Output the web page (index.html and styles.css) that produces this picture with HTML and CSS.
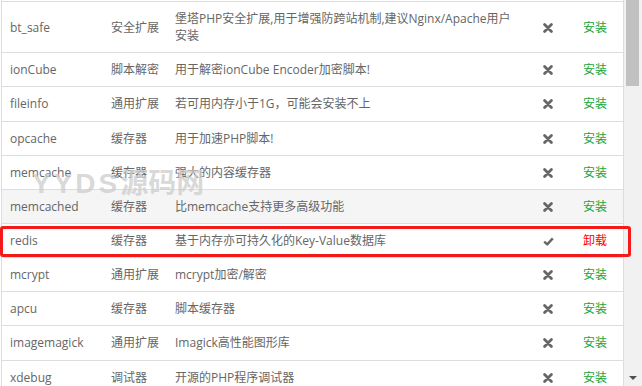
FILE: index.html
```html
<!DOCTYPE html>
<html lang="zh-CN">
<head>
<meta charset="utf-8">
<title>PHP扩展</title>
<link rel="stylesheet" href="styles.css">
</head>
<body>
<div class="page">
  <div class="panel">
    <table class="ext-table">
      <colgroup>
        <col class="c-name"><col class="c-type"><col class="c-desc"><col class="c-stat"><col class="c-op">
      </colgroup>
      <tbody>
        <tr><td>bt_safe</td><td>安全扩展</td><td>堡塔PHP安全扩展,用于增强防跨站机制,建议Nginx/Apache用户安装</td><td class="ctr"><svg class="ico" viewBox="0 0 10 10"><path d="M1.6 1.6L8.4 8.4M8.4 1.6L1.6 8.4"/></svg></td><td class="ctr"><a class="install">安装</a></td></tr>
        <tr><td>ionCube</td><td>脚本解密</td><td>用于解密ionCube Encoder加密脚本!</td><td class="ctr"><svg class="ico" viewBox="0 0 10 10"><path d="M1.6 1.6L8.4 8.4M8.4 1.6L1.6 8.4"/></svg></td><td class="ctr"><a class="install">安装</a></td></tr>
        <tr><td>fileinfo</td><td>通用扩展</td><td>若可用内存小于1G，可能会安装不上</td><td class="ctr"><svg class="ico" viewBox="0 0 10 10"><path d="M1.6 1.6L8.4 8.4M8.4 1.6L1.6 8.4"/></svg></td><td class="ctr"><a class="install">安装</a></td></tr>
        <tr><td>opcache</td><td>缓存器</td><td>用于加速PHP脚本!</td><td class="ctr"><svg class="ico" viewBox="0 0 10 10"><path d="M1.6 1.6L8.4 8.4M8.4 1.6L1.6 8.4"/></svg></td><td class="ctr"><a class="install">安装</a></td></tr>
        <tr><td>memcache</td><td>缓存器</td><td>强大的内容缓存器</td><td class="ctr"><svg class="ico" viewBox="0 0 10 10"><path d="M1.6 1.6L8.4 8.4M8.4 1.6L1.6 8.4"/></svg></td><td class="ctr"><a class="install">安装</a></td></tr>
        <tr class="hover"><td>memcached</td><td>缓存器</td><td>比memcache支持更多高级功能</td><td class="ctr"><svg class="ico" viewBox="0 0 10 10"><path d="M1.6 1.6L8.4 8.4M8.4 1.6L1.6 8.4"/></svg></td><td class="ctr"><a class="install">安装</a></td></tr>
        <tr><td>redis</td><td>缓存器</td><td>基于内存亦可持久化的Key-Value数据库</td><td class="ctr"><svg class="ico chk" viewBox="0 0 11 9"><path d="M1.2 4.6L4.2 7.4L9.8 1.4"/></svg></td><td class="ctr"><a class="uninstall">卸载</a></td></tr>
        <tr><td>mcrypt</td><td>通用扩展</td><td>mcrypt加密/解密</td><td class="ctr"><svg class="ico" viewBox="0 0 10 10"><path d="M1.6 1.6L8.4 8.4M8.4 1.6L1.6 8.4"/></svg></td><td class="ctr"><a class="install">安装</a></td></tr>
        <tr><td>apcu</td><td>缓存器</td><td>脚本缓存器</td><td class="ctr"><svg class="ico" viewBox="0 0 10 10"><path d="M1.6 1.6L8.4 8.4M8.4 1.6L1.6 8.4"/></svg></td><td class="ctr"><a class="install">安装</a></td></tr>
        <tr><td>imagemagick</td><td>通用扩展</td><td>Imagick高性能图形库</td><td class="ctr"><svg class="ico" viewBox="0 0 10 10"><path d="M1.6 1.6L8.4 8.4M8.4 1.6L1.6 8.4"/></svg></td><td class="ctr"><a class="install">安装</a></td></tr>
        <tr><td>xdebug</td><td>调试器</td><td>开源的PHP程序调试器</td><td class="ctr"><svg class="ico" viewBox="0 0 10 10"><path d="M1.6 1.6L8.4 8.4M8.4 1.6L1.6 8.4"/></svg></td><td class="ctr"><a class="install">安装</a></td></tr>
      </tbody>
    </table>
  </div>
  <div class="scrollbar">
    <div class="thumb"></div>
    <div class="arrow"></div>
  </div>
  <div class="watermark"><span class="wm-latin">YYDS</span><span class="wm-cjk">源码网</span></div>
  <div class="highlight"></div>
</div>
</body>
</html>
```
FILE: styles.css
```css
html, body {
  margin: 0;
  padding: 0;
  background: #fff;
}
body {
  width: 642px;
  height: 386px;
  overflow: hidden;
  font-family: "Open Sans", "Noto Sans CJK SC", sans-serif;
  font-size: 12px;
  color: #666;
}
.page {
  position: relative;
  display: flex;
  height: 386px;
}
.panel {
  margin-left: 1px;
  width: 621px;
  border-left: 1px solid #ddd;
  border-right: 1px solid #ddd;
  padding-top: 1px;
  overflow: hidden;
}
.ext-table {
  width: 621px;
  table-layout: fixed;
  border-collapse: collapse;
  border-spacing: 0;
}
.c-name { width: 101px; }
.c-type { width: 64px; }
.c-desc { width: 362px; }
.c-stat { width: 38px; }
.c-op { width: 56px; }
.ext-table td {
  padding: 8px;
  line-height: 1.42857143;
  border-top: 1px solid #ddd;
  vertical-align: middle;
}
.ext-table tr.hover td {
  background: #f5f5f5;
}
.ctr { text-align: center; }
.ico {
  width: 10px;
  height: 10px;
  display: inline-block;
  vertical-align: -1px;
}
.ico path {
  fill: none;
  stroke: #666;
  stroke-width: 2.8;
  stroke-linecap: round;
  stroke-linejoin: round;
}
.ico.chk {
  width: 11px;
  height: 9px;
}
.ico.chk path { stroke-width: 2.4; stroke-linecap: butt; }
.install { color: #20a53a; }
.uninstall { color: #ff0000; }
.scrollbar {
  width: 18px;
  background: #f1f1f1;
  display: flex;
  flex-direction: column;
}
.thumb {
  margin: 0 3px 0 2px;
  height: 86px;
  background: #c1c1c1;
}
.arrow {
  margin: auto 0 6px 5px;
  width: 0;
  height: 0;
  border-left: 4px solid transparent;
  border-right: 4px solid transparent;
  border-top: 4px solid #505050;
}
.watermark {
  position: absolute;
  left: 32px;
  top: 166px;
  font-family: "Liberation Sans", "Noto Sans CJK SC", sans-serif;
  font-weight: bold;
  font-size: 28px;
  line-height: 36px;
  color: rgba(205, 205, 205, 0.75);
  white-space: nowrap;
  pointer-events: none;
}
.wm-latin { letter-spacing: 3px; }
.wm-cjk { letter-spacing: 0; }
.highlight {
  position: absolute;
  left: 0;
  top: 226px;
  width: 625px;
  height: 25px;
  border: 3px solid #f51a1a;
  border-radius: 3px;
  pointer-events: none;
}
```
